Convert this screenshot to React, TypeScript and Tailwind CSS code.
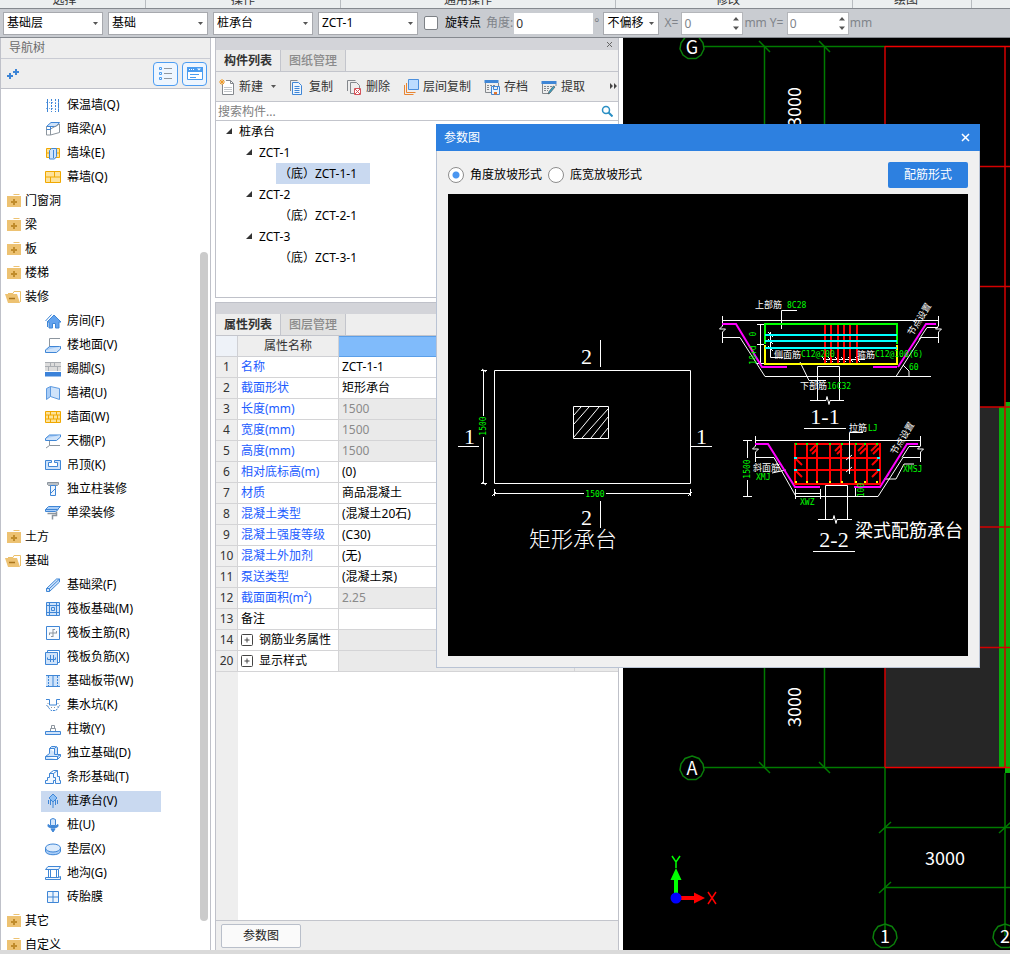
import type { ReactNode } from "react";

const BLUE = "#3f86d6";
const LIGHT = "#cfe3fa";
const GRAY = "#8c959e";
const GOLD = "#f0a800";
const SAND = "#fde29a";

// 16x16 drawings used by the navigation tree
const navIcons: Record<string, ReactNode> = {
  insulation: (
    <g stroke={BLUE}>
      <path d="M2.500 2v13M13.500 2v13" />
      <path d="M6.500 2v13M10.500 2v13" strokeDasharray="2 1" />
      <path d="M1 5.500h14M1 11.500h14" stroke="#7fb0e8" strokeDasharray="1 2" />
    </g>
  ),
  hiddenBeam: (
    <g>
      <path d="M1.500 5.500 6 1.500h8.500l-3.500 4z" fill={LIGHT} stroke={BLUE} />
      <path d="M1.500 5.500v8.500h4V8l9-5v8.500L5.500 14" stroke={GRAY} />
      <path d="M1.500 8.500h4V5.500" stroke={BLUE} />
    </g>
  ),
  pier: (
    <g>
      <path d="M1.500 3.500h13v9h-13zM1.500 8h13" fill={SAND} stroke={GOLD} />
      <path d="M4.500 5.500 6.500 3.500h5v8l-2 2.500h-5zM8.500 5v8" fill={LIGHT} stroke={BLUE} />
    </g>
  ),
  curtain: (
    <path d="M.5 2.500h15v11H.5zM.5 8h15M9.500 2.500V8M5.500 8v5.500" fill={SAND} stroke={GOLD} />
  ),
  room: (
    <g>
      <path d="M.5 8 6.500 1.500" stroke={BLUE} />
      <path d="M2.500 9v5" stroke={BLUE} />
      <path d="M2 9 9 2l7 7h-2v6h-3.500v-4.500h-3V15H4V9z" fill="#63a3ee" stroke={BLUE} />
    </g>
  ),
  floor: (
    <g>
      <path d="M15 1.500H4.500V10" stroke={GRAY} />
      <path d="m.5 13 4-3.500h11l-4 3.500z" fill="#a9cdf7" stroke={BLUE} />
      <path d="M.5 13v2.500h11l4-3.500V9.500" fill={LIGHT} stroke={BLUE} />
    </g>
  ),
  skirting: (
    <g>
      <path d="M0 1h16v9H0z" fill="#dcdcdc" />
      <path d="M0 1.500h16M0 5.500h16M5.500 1v4M12.500 5v5M3.500 6v4M9.500 1v4" stroke="#a9adb2" />
      <path d="M0 11h16v4.500H0z" fill="#3b82d9" />
    </g>
  ),
  dado: (
    <g stroke="#5d9ae0">
      <path d="m1.500 3.500 4-2v10l-4 3z" fill="#a9cdf7" />
      <path d="m5.500 1.500 9 2v11l-9-3z" fill={LIGHT} />
    </g>
  ),
  wallFace: (
    <path
      d="M.5 2.500h15v11H.5zM.5 6h15M.5 10h15M5.500 2.500V6M11.500 2.500V6M8.500 6v4M3.500 6v4M12.500 6v4M5.500 10v3.500M11.500 10v3.500"
      fill={SAND}
      stroke={GOLD}
    />
  ),
  ceiling: (
    <g>
      <path d="m.5 5.500 4-3.500h11l-4 3.500z" fill="#a9cdf7" stroke={BLUE} />
      <path d="M.5 5.500v2h11l4-3.500V2" fill={LIGHT} stroke={BLUE} />
      <path d="M4.500 8v4.500H15M4.500 12.500 1 15" stroke={GRAY} />
    </g>
  ),
  suspended: (
    <path d="M.5 3.500h6v2h-3v4h9v-4h-3v-2h6v9H.5z" fill={LIGHT} stroke={BLUE} />
  ),
  column: (
    <g>
      <path d="M2.500 1.500h11v2l-1 1h-9l-1-1z" fill="#b9bfc5" stroke={GRAY} />
      <path d="M5.500 4.500h5v10h-5z" fill="#eef5fd" stroke={BLUE} />
      <path d="m6 12 4-4" stroke={BLUE} />
    </g>
  ),
  singleBeam: (
    <g>
      <path d="m.5 4.500 3-3h12l-3 3zM.5 4.500v2h10l3-2" fill="#a9cdf7" stroke={BLUE} />
      <path d="M2.500 8.500h9v-2M11.500 8.500v2H7.500v4" stroke={GRAY} strokeWidth="1.500" />
    </g>
  ),
  foundationBeam: (
    <path d="M1.500 11.500 11.500 2h3v3l-10 9.500h-3zM1.500 11.500h3v3M4.500 11.500l10-9.500" fill={LIGHT} stroke={BLUE} />
  ),
  raft: (
    <g stroke={BLUE}>
      <path d="M1.500 1.500h13v13h-13z" fill={LIGHT} />
      <path d="M4.500 2v12M11.500 2v12M2 4.500h12M2 11.500h12M6.500 6.500h3v3h-3z" />
    </g>
  ),
  raftMain: (
    <g>
      <path d="M1.500 1.500h13v13h-13z" fill="#f7fbff" stroke={BLUE} />
      <path d="M8 4v8M4 8h8M8 4.500h2M8 11.500H6M4.500 8v2M11.500 8V6" stroke={GRAY} />
    </g>
  ),
  raftNeg: (
    <g stroke={BLUE}>
      <path d="M.5 3.500h12v12H.5z" fill={LIGHT} />
      <path d="M2.500 3V1.500h12v12H13M5.500 6v7M8.500 6v7M2.500 8.500v2h8v-2" />
    </g>
  ),
  strip: (
    <g stroke={BLUE}>
      <path d="M1 2.500h14v11H1z" fill={LIGHT} stroke="none" />
      <path d="M1 2.500h14M1 13.500h14M8 2.500v11" />
      <path d="M3.500 3v10M12.500 3v10" strokeDasharray="2 1" />
    </g>
  ),
  sump: (
    <g stroke={BLUE}>
      <path d="M1 2.500h3.500V8h7V2.500H15" />
      <path d="M1.500 8 6 13.500h5L15 8" strokeDasharray="2 1" />
      <path d="M3 6v4M6 10.500h6M13 6v4" stroke={GRAY} strokeDasharray="1 2" />
    </g>
  ),
  pedestal: (
    <g>
      <path d="M.5 10.500h15v3H.5z" fill={LIGHT} stroke={BLUE} />
      <path d="M5.500 10V7.500h5V10M6.500 7.500v-3h3v3" stroke={GRAY} />
    </g>
  ),
  isolated: (
    <path
      d="M.5 11.500v3h12l3-3v-2h-3V2.500l-2-1h-4l-2 2v5l-4 3zM4.500 3.500h5v6h3M9.500 3.500l2-2M.5 11.500h12v3M12.500 11.500l3-2"
      fill={LIGHT}
      stroke={BLUE}
    />
  ),
  stripBase: (
    <path
      d="M.5 14.500v-3h2v-3h2V4.500l4-3h4v6h2v4h1v3h-5v-3h-2v3zM4.500 4.500h4l4-3M8.500 4.500v4h2v3"
      fill="#f2f8ff"
      stroke={BLUE}
    />
  ),
  pileCap: (
    <g stroke={BLUE}>
      <path d="m8 1 4 4-4 4-4-4z" fill="#8fc0f5" />
      <path d="M3.500 7v4M12.500 7v4M5.500 7v5M10.500 7v5M8 9v6" />
    </g>
  ),
  pile: (
    <g stroke={BLUE}>
      <path d="M5.500 2.500q2.500-2 5 0v6h-5z" fill={LIGHT} />
      <path d="M3 7.500 5.500 9h5L13 7.500v2L10 11H6L3 9.500z" fill={BLUE} />
      <path d="M6 12h4l-2 3z" fill={BLUE} />
    </g>
  ),
  cushion: (
    <g stroke={BLUE}>
      <path d="M.5 7v3c0 5 15 5 15 0V7" fill="#a9cdf7" />
      <ellipse cx="8" cy="7" rx="7.500" ry="4" fill="#dcebfc" />
    </g>
  ),
  trench: (
    <g stroke={BLUE}>
      <path d="m.5 4.500 2.500-3h12.500l-2 3zM.5 12.500h13l2-1v3H.5z" fill="#eef5fd" />
      <path d="M3.500 4.500v8M5.500 4.500v8M11.500 4.500v8M13.500 4.500v8" />
    </g>
  ),
  brick: (
    <g stroke={BLUE}>
      <path d="M2.500 2.500h11v11h-11z" fill="#eef5fd" />
      <path d="M8 2.500v11M2.500 8h11" />
    </g>
  ),
};

type NavRow = { label: string; icon?: string; open?: boolean; active?: boolean };

const navRows: NavRow[] = [
  { label: "保温墙(Q)", icon: "insulation" },
  { label: "暗梁(A)", icon: "hiddenBeam" },
  { label: "墙垛(E)", icon: "pier" },
  { label: "幕墙(Q)", icon: "curtain" },
  { label: "门窗洞" },
  { label: "梁" },
  { label: "板" },
  { label: "楼梯" },
  { label: "装修", open: true },
  { label: "房间(F)", icon: "room" },
  { label: "楼地面(V)", icon: "floor" },
  { label: "踢脚(S)", icon: "skirting" },
  { label: "墙裙(U)", icon: "dado" },
  { label: "墙面(W)", icon: "wallFace" },
  { label: "天棚(P)", icon: "ceiling" },
  { label: "吊顶(K)", icon: "suspended" },
  { label: "独立柱装修", icon: "column" },
  { label: "单梁装修", icon: "singleBeam" },
  { label: "土方" },
  { label: "基础", open: true },
  { label: "基础梁(F)", icon: "foundationBeam" },
  { label: "筏板基础(M)", icon: "raft" },
  { label: "筏板主筋(R)", icon: "raftMain" },
  { label: "筏板负筋(X)", icon: "raftNeg" },
  { label: "基础板带(W)", icon: "strip" },
  { label: "集水坑(K)", icon: "sump" },
  { label: "柱墩(Y)", icon: "pedestal" },
  { label: "独立基础(D)", icon: "isolated" },
  { label: "条形基础(T)", icon: "stripBase" },
  { label: "桩承台(V)", icon: "pileCap", active: true },
  { label: "桩(U)", icon: "pile" },
  { label: "垫层(X)", icon: "cushion" },
  { label: "地沟(G)", icon: "trench" },
  { label: "砖胎膜", icon: "brick" },
  { label: "其它" },
  { label: "自定义" },
];

const properties = [
  { no: 1, name: "名称", value: "ZCT-1-1" },
  { no: 2, name: "截面形状", value: "矩形承台" },
  { no: 3, name: "长度(mm)", value: "1500", locked: true },
  { no: 4, name: "宽度(mm)", value: "1500", locked: true },
  { no: 5, name: "高度(mm)", value: "1500", locked: true },
  { no: 6, name: "相对底标高(m)", value: "(0)" },
  { no: 7, name: "材质", value: "商品混凝土" },
  { no: 8, name: "混凝土类型", value: "(混凝土20石)" },
  { no: 9, name: "混凝土强度等级", value: "(C30)" },
  { no: 10, name: "混凝土外加剂", value: "(无)" },
  { no: 11, name: "泵送类型", value: "(混凝土泵)" },
  { no: 12, name: "截面面积(m²)", value: "2.25", locked: true },
  { no: 13, name: "备注", value: "", plain: true },
  { no: 14, name: "钢筋业务属性", value: "", locked: true, group: true },
  { no: 20, name: "显示样式", value: "", locked: true, group: true },
];

const components = ["ZCT-1", "ZCT-2", "ZCT-3"];

function Folder({ open }: { open?: boolean }) {
  return open ? (
    <svg width="16" height="14" viewBox="0 0 16 14" className="shrink-0">
      <path d="M3 3.500h5l1-2h6.500V12" fill="none" stroke="#ecc069" />
      <path d="M0 4h12l3 9H3z" fill="#edc272" />
      <path d="M4 8.500h6" stroke="#a9741c" strokeWidth="1.500" />
    </svg>
  ) : (
    <svg width="16" height="14" viewBox="0 0 16 14" className="shrink-0">
      <path d="M9 0h5l1 1H8zM2 2h14v11H2z" fill="#edc272" />
      <path d="M9 5v6M6 8h6" stroke="#c08c2c" strokeWidth="2" />
    </svg>
  );
}

function Combo({ label, value, className }: { label: string; value: string; className: string }) {
  return (
    <div className={`relative h-[23px] ${className}`}>
      <select
        aria-label={label}
        className="h-full w-full appearance-none border border-[#a7a9ae] bg-white pl-[3px] text-black outline-none"
      >
        <option>{value}</option>
      </select>
      <svg width="5" height="3" className="pointer-events-none absolute top-[10px] right-[5px]">
        <path d="M0 0h5L2.500 3z" fill="#555" />
      </svg>
    </div>
  );
}

function Spin({ label }: { label: string }) {
  return (
    <label className="flex items-center text-[#80848a]">
      <span className="w-[17px]">{label}</span>
      <span className="relative h-[23px] w-[62px]">
        <input defaultValue="0" className="h-full w-full border border-[#b4b6ba] bg-white pl-[2px] outline-none" />
        <svg width="6" height="13" className="absolute top-[5px] right-[4px]">
          <path d="M0 3.500h6L3 0zM0 9.500h6L3 13z" fill="#555" />
        </svg>
      </span>
      <span className="ml-px">mm</span>
    </label>
  );
}

function TopBar() {
  return (
    <header className="shrink-0">
      {/* bottom edge of the ribbon, only the group captions peek out */}
      <div className="flex h-2 overflow-hidden bg-[#eceff0] leading-4 text-[#333]">
        <div className="flex w-[146px] items-end justify-center border-r border-[#b8bcc0] pr-4">选择</div>
        <div className="flex w-[195px] items-end justify-center border-r border-[#b8bcc0]">操作</div>
        <div className="flex w-[275px] items-end justify-center border-r border-[#b8bcc0] pr-5">通用操作</div>
        <div className="flex w-[237px] items-end justify-center border-r border-[#b8bcc0] pr-3">修改</div>
        <div className="flex w-[119px] items-end justify-center border-r border-[#b8bcc0] pr-3">绘图</div>
      </div>
      <div className="flex h-[30px] items-center border-y border-[#85898f] bg-[#c9ccd1] pl-[3px] text-black">
        <div className="flex gap-[5px]">
          <Combo label="楼层" value="基础层" className="w-[100px]" />
          <Combo label="构件大类" value="基础" className="w-[100px]" />
          <Combo label="构件类型" value="桩承台" className="w-[100px]" />
          <Combo label="构件" value="ZCT-1" className="w-[100px]" />
        </div>
        <label className="ml-[6px] flex items-center gap-[7px]">
          <input type="checkbox" className="h-[14px] w-[14px] appearance-none rounded-xs border border-[#7d8186] bg-white" />
          旋转点
        </label>
        <label className="ml-[5px] flex items-center text-[#80848a]">
          角度:
          <input defaultValue="0" className="ml-px h-[21px] w-[79px] bg-white pl-[2px] text-[#333] outline-none" />
          <span className="ml-px">°</span>
        </label>
        <Combo label="偏移" value="不偏移" className="ml-1 w-14" />
        <div className="ml-[5px] flex gap-[3px]">
          <Spin label="X=" />
          <Spin label="Y=" />
        </div>
      </div>
    </header>
  );
}

function NavTree() {
  return (
    <nav className="flex w-[211px] shrink-0 flex-col border-x border-[#bfc1c9] bg-white">
      <h2 className="h-[21px] shrink-0 border-b border-[#c9cbd3] bg-[#eeeeee] pl-2 leading-5 text-[#6b6b6b]">导航树</h2>
      <div className="flex h-[30px] shrink-0 items-center justify-between border-b border-[#bfc1c9] bg-[#eeeeee] pr-[3px] pl-[6px]">
        <button aria-label="展开">
          <svg width="13" height="12" stroke="#3d85d6" strokeWidth="2">
            <path d="M0 8h6M3 5v6M6 4h6M9 1v6" />
          </svg>
        </button>
        <div className="flex gap-1">
          <button aria-label="列表" className="flex h-6 w-[25px] items-center justify-center rounded-sm border border-[#4d9df2] bg-[#eef6ff]">
            <svg width="13" height="14" fill="none" stroke="#4a9cf0">
              <path d="M.5 .5h2v2h-2zM.5 5.500h2v2h-2zM.5 10.500h2v2h-2z" />
              <path d="M5 1.500h8M5 6.500h8M5 11.500h8" stroke="#8f979f" />
            </svg>
          </button>
          <button aria-label="面板" className="flex h-6 w-[25px] items-center justify-center rounded-sm border border-[#4d9df2] bg-[#eef6ff]">
            <svg width="16" height="14" fill="none" stroke="#4a9cf0">
              <path d="M.5 .5h15v12H.5z" fill="#fff" />
              <path d="M0 0h16v5H0z" fill="#4a9cf0" stroke="none" />
              <path d="M2 2.500h6" stroke="#fff" strokeDasharray="1 1" />
              <path d="M10 1.500h4l-2 2z" fill="#fff" stroke="none" />
              <path d="M3 7.500h9M3 10.500h6" />
            </svg>
          </button>
        </div>
      </div>
      <div className="relative min-h-0 flex-1 overflow-hidden">
        <ul className="pt-1">
          {navRows.map((row) => (
            <li key={row.label} className={`flex h-6 items-center ${row.icon ? "pl-10" : "pl-1"}`}>
              <a
                href="#nav"
                className={`flex h-[21px] items-center text-black ${row.icon ? "w-[120px] gap-[6px] pl-1" : "gap-1"} ${row.active ? "bg-[#c9d9f0]" : ""}`}
              >
                {row.icon ? (
                  <svg width="16" height="16" viewBox="0 0 16 16" fill="none" className="shrink-0">
                    {navIcons[row.icon]}
                  </svg>
                ) : (
                  <Folder open={row.open} />
                )}
                {row.label}
              </a>
            </li>
          ))}
        </ul>
        <div className="absolute top-[163px] right-[2px] bottom-[29px] w-2 rounded-full bg-[#cbcbcb]" />
      </div>
    </nav>
  );
}

function Tabs({ names }: { names: string[] }) {
  return (
    <div className="flex h-[22px] shrink-0 border-b border-[#c3c5cc] bg-[#eeeeee]" role="tablist">
      {names.map((name, i) => (
        <button
          key={name}
          role="tab"
          className={`border-r border-[#c3c5cc] px-2 ${i === 0 ? "font-bold text-[#333]" : "bg-[#e2e2e2] font-medium text-[#8a8a8a]"}`}
        >
          {name}
        </button>
      ))}
    </div>
  );
}

function Tool({ label, children }: { label: string; children: ReactNode }) {
  return (
    <button className="flex shrink-0 items-center gap-1 text-[#333]">
      <svg width="16" height="16" viewBox="0 0 16 16" fill="none">
        {children}
      </svg>
      {label}
    </button>
  );
}

function Expander() {
  return (
    <svg width="7" height="7" className="shrink-0">
      <path d="M6 0v6H0z" fill="#333" />
    </svg>
  );
}

function ComponentList() {
  return (
    <section className="shrink-0 border-x border-b border-[#bfc1c9] bg-white">
      <div className="flex h-3 items-center justify-end bg-[#d3d4d9] pr-[5px]">
        <button aria-label="关闭">
          <svg width="7" height="7" stroke="#666">
            <path d="m1 1 5 5M6 1 1 6" />
          </svg>
        </button>
      </div>
      <Tabs names={["构件列表", "图纸管理"]} />
      <div className="flex h-[30px] items-center justify-between border-b border-[#c3c5cc] bg-[#eeeeee] pl-[3px]">
        <div className="flex items-center gap-[13px]">
          <div className="flex items-center gap-2">
            <Tool label="新建">
              <path d="M3.500 5V15.500h11v-11l-3-3H7M11.500 1.500v3h3" fill="#fff" stroke="#84888d" />
              <path d="M5 8.500h8M5 10.500h8M5 12.500h8" stroke="#c3c7cb" />
              <path d="m1 1 4 4M5 1 1 5M3 0v6M0 3h6" stroke="#ee9a28" />
            </Tool>
            <svg width="5" height="3">
              <path d="M0 0h5L2.500 3z" fill="#555" />
            </svg>
          </div>
          <Tool label="复制">
            <path d="M1.500 12V1.500h7" stroke="#84888d" />
            <path d="M3.500 3.500h6l3 3v9h-9z" fill="#eef5fd" stroke={BLUE} />
            <path d="M5.500 7.500h5M5.500 9.500h5M5.500 11.500h5M5.500 13.500h5" stroke={BLUE} />
          </Tool>
          <Tool label="删除">
            <path d="M1.500 12V1.500h8M4.500 8V3.500h6l3 3V9M4.500 8v6.500H8" stroke="#84888d" />
            <path d="M8.500 9.500h6v6h-6z" fill="#fff" stroke="#d4545a" />
            <path d="m9 10 5 5M14 10l-5 5" stroke="#d4545a" />
          </Tool>
          <Tool label="层间复制">
            <path d="M1.500 6v9.500h9M3.500 4v9.500h9" stroke="#e98532" />
            <path d="M5.500 .5h10v10h-10z" fill="#bcdcff" stroke="#4b8fdd" />
          </Tool>
          <Tool label="存档">
            <path d="M.5 1h14v3H.5z" fill={BLUE} />
            <path d="M1.500 4v9.500H7M14.500 4v3" stroke="#84888d" />
            <path d="M3 6.500h8M3 8.500h3M3 10.500h3" stroke="#84888d" strokeDasharray="2 1" />
            <path d="M7.500 7.500h8v8h-8zM9.500 7.500v3h4v-3" fill="#e8f2fd" stroke={BLUE} />
            <path d="M10 13h3v2.500h-3z" fill="#e5762c" />
          </Tool>
          <Tool label="提取">
            <path d="M.5 2h15v3H.5z" fill={BLUE} />
            <path d="M1.500 5v9.500h7M15 5v2" stroke="#84888d" />
            <path d="M3 7.500h8M3 9.500h6M3 11.500h4" stroke="#84888d" strokeDasharray="2 1" />
            <path d="m7 15 2-1 5-6-1.500-1L8 12.500z" fill="#33a6cc" stroke="#555" strokeWidth=".7" />
          </Tool>
        </div>
        <svg width="9" height="7" className="shrink-0">
          <path d="M1 0v6l3-3zM5 0v6l3-3z" fill="#444" />
        </svg>
      </div>
      <div className="flex h-[19px] items-center border-b border-[#c3c5cc] pr-[5px]">
        <input aria-label="搜索构件" placeholder="搜索构件..." className="h-full min-w-0 flex-1 pl-[2px] outline-none placeholder:text-[#808080]" />
        <svg width="12" height="12" fill="none" stroke="#2a8fc4">
          <circle cx="5" cy="5" r="3.500" strokeWidth="1.500" />
          <path d="m7.500 7.500 4 4" strokeWidth="2" />
        </svg>
      </div>
      <ul className="h-44 overflow-hidden text-black">
        <li className="flex h-[21px] items-center gap-[6px] pl-[10px]">
          <Expander />
          桩承台
        </li>
        {components.map((name, i) => (
          <li key={name}>
            <div className="flex h-[21px] items-center gap-[6px] pl-[30px]">
              <Expander />
              {name}
            </div>
            <div className={`ml-[60px] h-[21px] w-[94px] pl-[3px] leading-[21px] ${i === 0 ? "bg-[#c9d9f0]" : ""}`}>
              （底）{name}-1
            </div>
          </li>
        ))}
      </ul>
    </section>
  );
}

function PropertyList() {
  return (
    <section className="flex min-h-0 flex-1 flex-col border-x border-[#bfc1c9] bg-[#eeeeee]">
      <div className="h-3 shrink-0 border-t border-[#bfc1c9] bg-[#d3d4d9]" />
      <Tabs names={["属性列表", "图层管理"]} />
      <div className="flex min-h-0 flex-1 flex-col overflow-hidden border-b border-[#c3c5cc] bg-white">
        <table className="w-full table-fixed border-separate border-spacing-0 text-left">
          <colgroup>
            <col className="w-[22px]" />
            <col className="w-[101px]" />
            <col />
            <col className="w-[43px]" />
          </colgroup>
          <thead>
            <tr className="h-[21px]">
              <th className="border-r border-b border-[#cfd0d4] bg-[#eef2f8]" />
              <th className="border-r border-b border-[#cfd0d4] bg-[#eeeeee] text-center font-normal text-[#333]">属性名称</th>
              <th className="border border-l-0 border-[#5b9fe8] bg-[#80bbfb]" />
              <th className="border-b border-[#cfd0d4] bg-[#eeeeee]" />
            </tr>
          </thead>
          <tbody>
            {properties.map((p) => (
              <tr key={p.no} className="h-[21px]">
                <td className="border-r border-b border-[#d4d4d6] bg-[#eeeeee] text-center text-[#333]">{p.no}</td>
                <td
                  className={`border-r border-b border-[#d4d4d6] pl-[3px] whitespace-nowrap ${p.plain || p.group ? "text-black" : "text-[#1c5cff]"}`}
                >
                  <span className="flex items-center gap-[6px]">
                    {p.group && (
                      <svg width="12" height="12" fill="none" stroke="#444">
                        <rect x=".5" y=".5" width="11" height="11" rx="1" />
                        <path d="M3.500 6h5M6 3.500v5" />
                      </svg>
                    )}
                    {p.name}
                  </span>
                </td>
                <td className={`border-r border-b border-[#d4d4d6] pl-[3px] ${p.locked ? "bg-[#eaeaea] text-[#8a8a8a]" : "text-black"}`}>
                  {p.value}
                </td>
                <td className="border-b border-[#d4d4d6] bg-[#eaeaea]" />
              </tr>
            ))}
          </tbody>
        </table>
        <div className="w-[22px] flex-1 bg-[#eeeeee]" />
      </div>
      <div className="flex h-[29px] shrink-0 items-center pl-[5px]">
        <button className="h-6 w-20 rounded-xs border border-[#b9bfca] bg-[#fafafa] text-[#222]">参数图</button>
      </div>
    </section>
  );
}

function AxisMark({ x, y, name }: { x: number; y: number; name: string }) {
  return (
    <g>
      <path
        d="M0-12 7-9.500 11-4 12 2 9 8 4 11.500-4 11.500-9 8-12 2-11-4-7-9.500z"
        transform={`translate(${x} ${y})`}
        fill="none"
        stroke="#0a7d0a"
        strokeWidth="1.500"
      />
      <text x={x} y={y + 7} textAnchor="middle" fill="#fff" stroke="none">
        {name}
      </text>
    </g>
  );
}

function ModelCanvas() {
  return (
    <main className="min-w-0 flex-1 bg-black">
      <svg className="block h-full w-full" fontSize="18" fontFamily="'Noto Sans CJK SC', sans-serif">
        <g transform="translate(-623 -38)">
          <rect x="885" y="407" width="114" height="360" fill="#262626" />
          <rect x="999" y="407" width="40" height="360" fill="#0aae0a" />
          <rect x="1005" y="402" width="40" height="6" fill="#0aae0a" />
          <rect x="1005" y="767" width="40" height="6" fill="#0aae0a" />
          <g stroke="#007a00" strokeWidth="1.500">
            <path d="M704 46.500h181M704 767.500h181M764.500 46v722M824.500 46v722" />
            <path d="m759 41 11 11m49-11 11 11M759 762l11 11m49-11 11 11" />
            <path d="M885 768v168M1005 773v163M885 827.500h160M885 887.500h160" />
            <path d="m879 833 12-11m-12 71 12-11m108-49 12-11" />
          </g>
          <path
            d="M885 46v721M1005 46v721M980 166.500h60M980 286.500h60M980 407h60M980 527h60M980 647.500h60"
            stroke="#d40000"
            strokeWidth="1.500"
          />
          <path d="M885 46.500h160M885 767.500h160" stroke="#f00000" strokeWidth="1.500" />
          <AxisMark x={692} y={47} name="G" />
          <AxisMark x={692} y={768} name="A" />
          <AxisMark x={885} y={936} name="1" />
          <AxisMark x={1005} y={936} name="2" />
          <g fill="#fff" textAnchor="middle">
            <text transform="translate(801 107) rotate(-90)">3000</text>
            <text transform="translate(801 707) rotate(-90)">3000</text>
            <text x="945" y="865">3000</text>
          </g>
          {/* coordinate axes */}
          <path d="M674 893V880h-3.500l5.500-12 5.500 12H678v13z" fill="#0f0" />
          <path d="M681 896h13v-3.500l11 5.500-11 5.500V900h-13z" fill="#f00" />
          <circle cx="676" cy="898" r="5.500" fill="#00f" />
          <path d="m672 856 4 6 4-6M676 862v6" fill="none" stroke="#0f0" strokeWidth="1.500" />
          <path d="m708 892 8 12M716 892l-8 12" fill="none" stroke="#f00" strokeWidth="1.500" />
        </g>
      </svg>
    </main>
  );
}

function PlanView() {
  return (
    <g>
      <g fill="none" stroke="#fff">
        <path d="M494.500 370.500h196v113h-196zM573.500 406.500h35v32h-35z" />
        <path d="m574 415 7-8M574 424l15-17M574 437l25-30M582 438l26-29M591 438l17-21M600 438l8-10" />
        <path d="M600.500 340v27M600.500 501v27M458 446.500h21M691 446.500h21" />
        <path d="M483.500 370v46M483.500 437v47M481 370.500h6M481 483.500h6M482 369l4 3M482 482l4 3" />
        <path d="M494 493.500h90M606 493.500h85M494.500 489v7M690.500 489v7M492 496l4-4M688 496l4-4" />
      </g>
      <g fill="#fff" fontSize="22" fontFamily="'Liberation Serif', 'Noto Sans CJK SC', serif">
        <text x="581" y="364">2</text>
        <text x="581" y="525">2</text>
        <text x="464" y="444">1</text>
        <text x="696" y="444">1</text>
        <text x="529" y="547" fontWeight="300">矩形承台</text>
      </g>
      <g fill="#0f0" textAnchor="middle">
        <text x="595" y="497">1500</text>
        <text transform="translate(486 426) rotate(-90)">1500</text>
      </g>
    </g>
  );
}

function SectionOne() {
  return (
    <g>
      <g fill="none" stroke="#fff">
        <path d="M722 320.500h217M722.500 316v10l-3 3h6l-3 3v11M938.500 316v10l-3 3h6l-3 3v11" />
        <path d="M722 337.500h18l25 39h166M938 337.500h-17l-25 39M938 327.500h-11l-8 12" />
        <path d="M760.500 324v39M757 324.500h7M757 344.500h7M757 363.500h7" />
        <path d="M797 310.500h-15.500V329M783 357.500h-12.500V332M768 332l5 5M768 339l5 5M768 346l5 5" />
        <path d="m800 362 9 18.500h17M817.500 400V366.500h22V400M810 400.500h16l1-4 2 8 1-4h14" />
        <path d="M823 359.500h42M822 357l5 5M828 357l5 5M835 357l5 5M841 357l5 5M848 357l5 5M855 357l5 5" />
        <path d="m903 365 6 6v5M804 428.500h42" />
      </g>
      <g fill="none" strokeWidth="2">
        <path d="M722 324h14l26 43h25M936 324h-10l-28 43M873 367h24" stroke="#f0f" />
        <path d="M765 344V324h132v20" stroke="#0f0" />
        <path d="M765 345v19h132v-19" stroke="#ff0" />
        <path d="M825 325v38M831 325v38M838 325v38M844 325v38M850 325v38M857 325v38" stroke="#f00" />
        <path d="M765 335h132M765 341h132M765 348h132" stroke="#0ff" />
      </g>
      <g fill="#fff" fontSize="9">
        <text x="755" y="308">上部筋</text>
        <text x="774" y="358">侧面筋</text>
        <text x="857" y="358">箍筋</text>
        <text x="800" y="389">下部筋</text>
        <text textAnchor="middle" transform="translate(922 321) rotate(-58)">节点设置</text>
      </g>
      <g fill="#0f0">
        <text x="787" y="308">8C28</text>
        <text x="801" y="357">C12@200</text>
        <text x="875" y="357">C12@100(6)</text>
        <text x="827" y="389">16C32</text>
        <text x="909" y="370">60</text>
        <text textAnchor="middle" transform="translate(756 334) rotate(-90)">0</text>
        <text textAnchor="middle" transform="translate(756 355) rotate(-90)">10+d</text>
      </g>
      <text x="825" y="424" fill="#fff" fontSize="22" textAnchor="middle" fontFamily="'Liberation Serif', serif">
        1-1
      </text>
    </g>
  );
}

function SectionTwo() {
  return (
    <g>
      <g fill="none" stroke="#fff">
        <path d="M755 440.500h166M755.500 436v10l-3 3h6l-3 3v10M920.500 436v10l-3 3h6l-3 3v10" />
        <path d="M755 457.500h19l22 39h82l25-39h17M920 446.500h-11l-7 11" />
        <path d="M747.500 440v18M747.500 480v17M743 440.500h9M743 496.500h9" />
        <path d="M795 493.500h26M795.500 489v10M820.500 489v10M855.500 486v11M772 473l14-3" />
        <path d="M825.500 519V485.500h22V519M818 519.500h15l1-4 2 8 1-4h15M813 551.500h42" />
        <path d="M884 479h12l8-15h10M889 474l-5 6" />
      </g>
      <g fill="none" stroke="#f0f" strokeWidth="2">
        <path d="M755 444h13l27 43h25M918 444h-11l-27 43h-26" />
      </g>
      <g fill="none" stroke="#f00" strokeWidth="2">
        <path d="M795 444h85v40h-85zM795 458h85M795 470h85" />
        <path d="M807 444v40M817 444v40M830 444v40M841 444v40M855 444v40M867 444v40" />
        <path d="m810 451 7-7M812 454l5-5M835 451l7-7M837 454l5-5M858 451l7-7M860 454l6-6M871 451l7-7M873 454l6-6" />
        <path d="m796 459 6 6M796 471l6 6M878 459l-6 6M878 471l-6 6" />
      </g>
      <g fill="none" strokeWidth="2">
        <path d="M795 444h2m9 0h2m8 0h2m11 0h2m10 0h2m12 0h2m7 0h2m10 0h2" stroke="#0f0" />
        <path d="M795 482h2m9 0h2m8 0h2m11 0h2m10 0h2m12 0h2m7 0h2m10 0h2" stroke="#ff0" />
        <path d="M794 458h3m80 0h3M794 470h3m80 0h3" stroke="#0ff" />
      </g>
      <path d="M863 432.500h-13.500V474M846 460l6-5M846 472l6-5" fill="none" stroke="#fff" />
      <g fill="#fff" fontSize="9">
        <text x="849" y="431">拉筋</text>
        <text x="753" y="471">斜面筋</text>
        <text textAnchor="middle" transform="translate(905 440) rotate(-58)">节点设置</text>
      </g>
      <g fill="#0f0">
        <text x="868" y="431">LJ</text>
        <text x="756" y="480">XMJ</text>
        <text x="903" y="472">XMSJ</text>
        <text x="800" y="505">XWZ</text>
        <text textAnchor="middle" transform="translate(750 469) rotate(-90)">1500</text>
        <text textAnchor="middle" transform="translate(864 490) rotate(-90)">100</text>
      </g>
      <text x="834" y="547" fill="#fff" fontSize="22" textAnchor="middle" fontFamily="'Liberation Serif', serif">
        2-2
      </text>
      <text x="855" y="537" fill="#fff" fontSize="18" fontFamily="'Noto Sans CJK SC', sans-serif">
        梁式配筋承台
      </text>
    </g>
  );
}

function ParameterDialog() {
  return (
    <div
      role="dialog"
      aria-label="参数图"
      className="absolute top-[124px] left-[436px] w-[544px] border border-t-0 border-[#b9c3d4] bg-[#f0f0f0]"
    >
      <div className="-mx-px flex h-[27px] items-center justify-between bg-[#2d80e0] pr-[10px] pl-2 text-white">
        <span>参数图</span>
        <button aria-label="关闭">
          <svg width="9" height="9" stroke="#fff" strokeWidth="1.500">
            <path d="m1 1 7 7M8 1 1 8" />
          </svg>
        </button>
      </div>
      <div className="flex h-[43px] items-center justify-between px-[11px] pt-1">
        <div className="flex gap-[6px] text-black">
          {["角度放坡形式", "底宽放坡形式"].map((name, i) => (
            <label key={name} className="flex items-center gap-[6px]">
              <input
                type="radio"
                name="slope"
                defaultChecked={i === 0}
                className="h-4 w-4 appearance-none rounded-full border border-[#8d8d8d] bg-white checked:bg-[radial-gradient(circle,#4a96f0_3px,white_4px)]"
              />
              {name}
            </label>
          ))}
        </div>
        <button className="h-[26px] w-20 rounded-xs bg-[#2d80e0] text-white">配筋形式</button>
      </div>
      <div className="px-[11px] pb-[11px]">
        <svg
          viewBox="448 194 520 462"
          className="block w-full bg-black"
          fontSize="8"
          fontFamily="'DejaVu Sans Mono', 'Noto Sans CJK SC', monospace"
        >
          <PlanView />
          <SectionOne />
          <SectionTwo />
        </svg>
      </div>
    </div>
  );
}

export default function App() {
  return (
    <div className="relative flex h-screen w-full flex-col overflow-hidden bg-white font-['Noto_Sans','Noto_Sans_CJK_SC',sans-serif] text-xs">
      <TopBar />
      <div className="flex min-h-0 flex-1">
        <NavTree />
        <div className="mx-1 flex w-[404px] shrink-0 flex-col gap-1">
          <ComponentList />
          <PropertyList />
        </div>
        <ModelCanvas />
      </div>
      <footer className="h-1 shrink-0 bg-[#dadada]" />
      <ParameterDialog />
    </div>
  );
}
